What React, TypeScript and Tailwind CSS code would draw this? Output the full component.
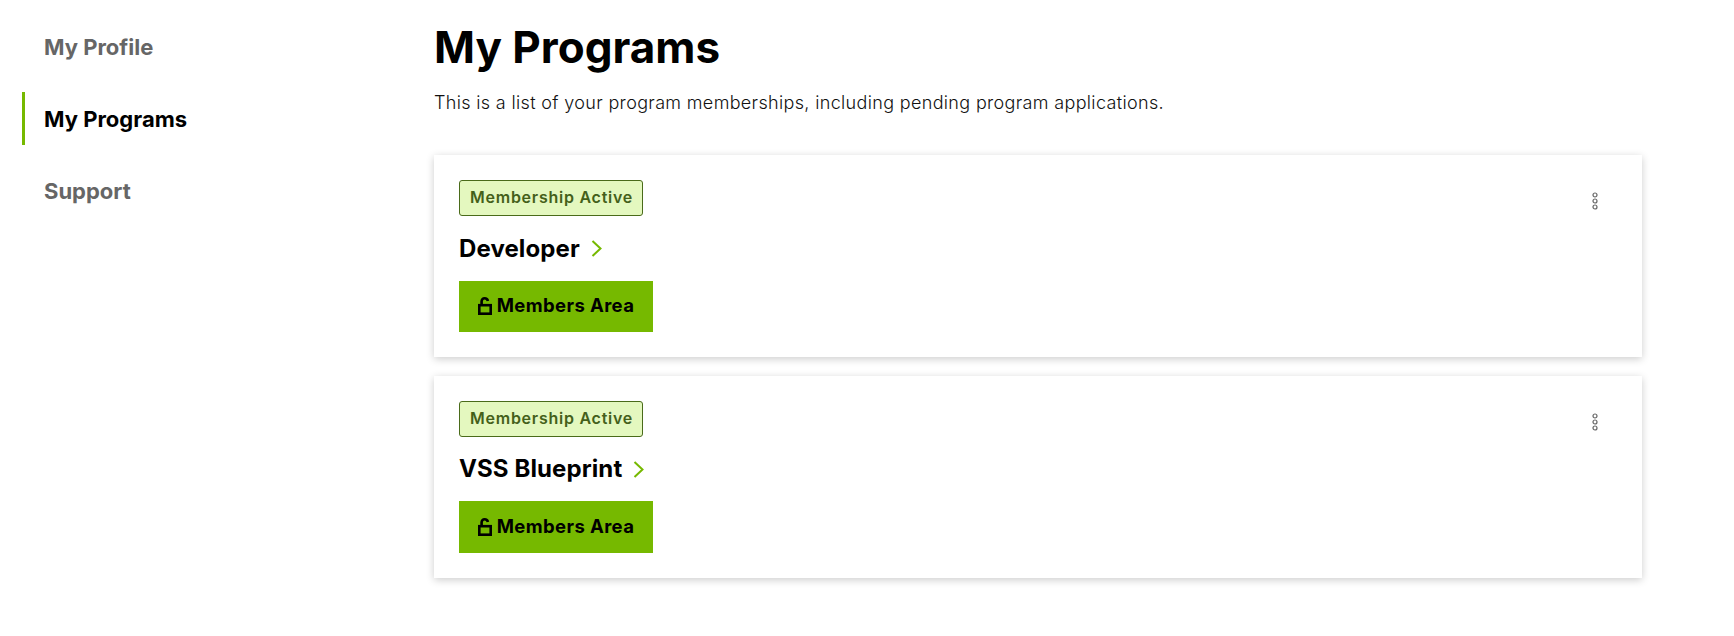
function NavItem({ label, active }: { label: string; active?: boolean }) {
  return (
    <a
      className={
        active
          ? 'h-[53px] pt-[2px] flex items-center border-l-[3px] border-[#76b900] pl-[19px] text-[22px] font-bold text-black'
          : 'h-[53px] pt-[2px] flex items-center border-l-[3px] border-transparent pl-[19px] text-[22px] font-bold text-[#666666]'
      }
    >
      {label}
    </a>
  );
}

function UnlockIcon() {
  return (
    <svg width="14" height="18" viewBox="0 0 14 18" fill="none" stroke="black" strokeWidth="2.6">
      <rect x="1.3" y="8.2" width="11.4" height="8.5" />
      <path d="M3.6 8V4.5C3.6 2.5 4.8 1.3 6.6 1.3C8.4 1.3 9.6 2.3 9.9 4" />
    </svg>
  );
}

function KebabIcon() {
  return (
    <svg width="8" height="18" viewBox="0 0 8 18" fill="none" stroke="#666666" strokeWidth="1.2">
      <circle cx="4" cy="3" r="2" />
      <circle cx="4" cy="9" r="2" />
      <circle cx="4" cy="15" r="2" />
    </svg>
  );
}

function ChevronIcon() {
  return (
    <svg width="11" height="17" viewBox="0 0 11 17" fill="none" stroke="#76b900" strokeWidth="2">
      <path d="M1.5 1L9.5 8.5L1.5 16" />
    </svg>
  );
}

function ProgramCard({ name }: { name: string }) {
  return (
    <div className="h-[201.8px] bg-white shadow-[0_2px_8px_rgba(0,0,0,0.2)] pl-[25px] pr-[43px] pt-[25px] flex justify-between">
      <div className="flex flex-col items-start">
        <span className="w-[184px] h-[36px] pl-[10px] pb-[2px] flex items-center rounded-[3px] border border-[#4a6b1a] bg-[#e4f8bf] text-[16px] tracking-[0.75px] font-semibold text-[#44601a]">
          Membership Active
        </span>
        <div className="mt-[15.6px] h-[34px] flex items-center gap-[11px] text-[24px] tracking-[0.1px] font-bold text-black">
          {name}
          <ChevronIcon />
        </div>
        <button className="mt-[15px] w-[194px] h-[51.4px] bg-[#76b900] flex items-center justify-center gap-[5px] text-[18.5px] tracking-[0.4px] font-bold text-black">
          <UnlockIcon />
          Members Area
        </button>
      </div>
      <div className="pt-[12px]">
        <KebabIcon />
      </div>
    </div>
  );
}

export default function App() {
  return (
    <div className="min-h-screen bg-white flex font-['Inter',sans-serif]">
      <aside className="w-[434px] shrink-0 pl-[22px] pt-[20px] flex flex-col gap-[19px]">
        <NavItem label="My Profile" />
        <NavItem label="My Programs" active />
        <NavItem label="Support" />
      </aside>
      <main className="w-[1208px]">
        <h1 className="mt-[18px] text-[44px] leading-[58px] font-bold text-black">My Programs</h1>
        <p className="mt-[13px] text-[18px] tracking-[0.34px] leading-[28px] font-[350] text-[#111111]">
          This is a list of your program memberships, including pending program applications.
        </p>
        <div className="mt-[38px] flex flex-col gap-[19px]">
          <ProgramCard name="Developer" />
          <ProgramCard name="VSS Blueprint" />
        </div>
      </main>
    </div>
  );
}
